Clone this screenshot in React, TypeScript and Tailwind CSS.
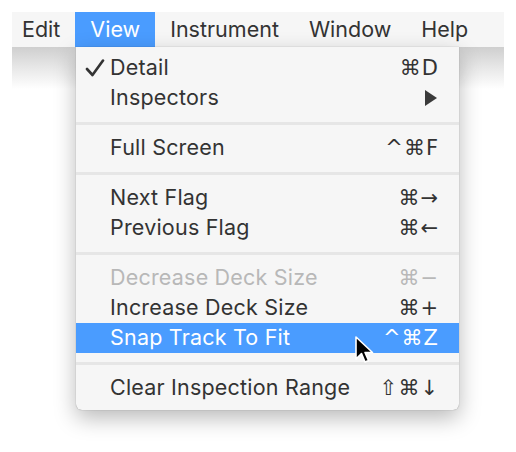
import React from "react";

const font = { fontFamily: "Inter, 'Liberation Sans', 'DejaVu Sans', sans-serif" };
const sym = { fontFamily: "'DejaVu Sans', sans-serif" };

type Item =
  | { type: "sep" }
  | { type: "item"; label: string; shortcut?: string; check?: boolean; submenu?: boolean; disabled?: boolean; active?: boolean };

const items: Item[] = [
  { type: "item", label: "Detail", shortcut: "⌘D", check: true },
  { type: "item", label: "Inspectors", submenu: true },
  { type: "sep" },
  { type: "item", label: "Full Screen", shortcut: "^⌘F" },
  { type: "sep" },
  { type: "item", label: "Next Flag", shortcut: "⌘→" },
  { type: "item", label: "Previous Flag", shortcut: "⌘←" },
  { type: "sep" },
  { type: "item", label: "Decrease Deck Size", shortcut: "⌘−", disabled: true },
  { type: "item", label: "Increase Deck Size", shortcut: "⌘+" },
  { type: "item", label: "Snap Track To Fit", shortcut: "^⌘Z", active: true },
  { type: "sep" },
  { type: "item", label: "Clear Inspection Range", shortcut: "⇧⌘↓" },
];

function Cursor() {
  return (
    <svg className="absolute left-[354px] top-[335px]" width="22" height="30" viewBox="0 0 22 30">
      <path
        d="M2 2 L2 24 L7.5 18.5 L11 27 L14.5 25.5 L11 17.5 L18.5 17.5 Z"
        fill="#000"
        stroke="#fff"
        strokeWidth="1.6"
        strokeLinejoin="round"
      />
    </svg>
  );
}

export default function App() {
  return (
    <div className="relative w-[516px] h-[452px] bg-white overflow-hidden" style={font}>
      <div className="pt-[12px] px-[12px]">
        <div className="flex h-[35px] bg-[#f6f6f6] text-[21.5px] text-[#333] items-stretch">
          <div className="pl-[10px] pr-[15px] flex items-center">Edit</div>
          <div className="px-[15px] flex items-center bg-[#4a9cff] text-white">View</div>
          <div className="px-[15px] flex items-center">Instrument</div>
          <div className="px-[15px] flex items-center">Window</div>
          <div className="px-[15px] flex items-center">Help</div>
        </div>
        <div className="h-[42px] bg-gradient-to-b from-[#cfcfcf] via-[#e8e8e8] to-white" />
      </div>

      <div className="absolute left-[76px] top-[47px] w-[383px] pt-[6px] pb-[7px] bg-[#f6f6f6] rounded-b-[6px] shadow-[0_0_1px_rgba(0,0,0,0.45),0_8px_22px_rgba(0,0,0,0.28)] text-[21.5px] tracking-[0.2px] text-[#333]">
        {items.map((it, i) =>
          it.type === "sep" ? (
            <div key={i} className="h-[20px] flex items-center">
              <div className="w-full h-[3px] bg-[#e6e6e6]" />
            </div>
          ) : (
            <div
              key={i}
              className={
                "h-[30px] flex items-center pr-[20px] " +
                (it.active ? "bg-[#4a9cff] text-white " : "") +
                (it.disabled ? "text-[#b8b8b8] " : "")
              }
            >
              <div className="w-[34px] flex justify-start pl-[9px]">
                {it.check && (
                  <svg width="20" height="18" viewBox="0 0 20 18">
                    <path d="M2 10 L7.5 16 L18 1.5" fill="none" stroke="#333" strokeWidth="2.6" strokeLinecap="round" strokeLinejoin="round" />
                  </svg>
                )}
              </div>
              <div className="flex-1 leading-none">{it.label}</div>
              {it.shortcut && (
                <div className="leading-none tracking-[1px] text-[21px]" style={sym}>
                  {it.shortcut}
                </div>
              )}
              {it.submenu && (
                <svg width="14" height="16" viewBox="0 0 14 16" className="mr-[1px]">
                  <path d="M1 0 L13 8 L1 16 Z" fill="#3a3a3a" />
                </svg>
              )}
            </div>
          )
        )}
      </div>

      <Cursor />
    </div>
  );
}
